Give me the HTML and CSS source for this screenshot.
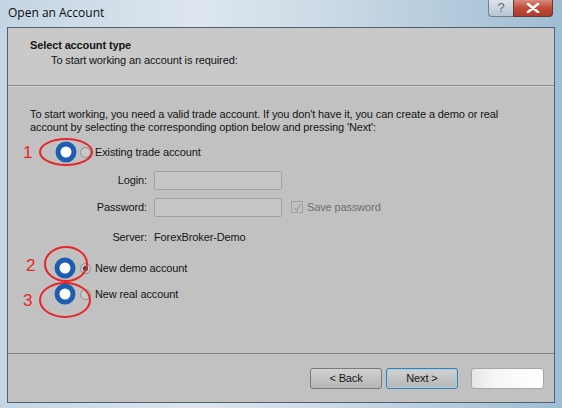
FILE: index.html
```html
<!DOCTYPE html>
<html>
<head>
<meta charset="utf-8">
<link rel="stylesheet" href="styles.css">
</head>
<body>
<div class="window">
  <div class="titlebar">
    <span class="title">Open an Account</span>
    <div class="controls">
      <span class="btn-help">?</span>
      <span class="btn-close">
        <svg width="14" height="10" viewBox="0 0 14 10"><path d="M2 1 L12 9 M12 1 L2 9" stroke="#fff" stroke-width="2.6" stroke-linecap="round"/></svg>
      </span>
    </div>
  </div>
  <div class="client">
    <div class="header">
      <div class="h-title">Select account type</div>
      <div class="h-sub">To start working an account is required:</div>
    </div>
    <div class="content">
      <p class="desc">To start working, you need a valid trade account. If you don't have it, you can create a demo or real account by selecting the corresponding option below and pressing 'Next':</p>
      <div class="radio-row r1"><span class="radio"></span><span>Existing trade account</span></div>
      <div class="field f-login"><span class="lbl">Login:</span><span class="input"></span></div>
      <div class="field f-pass"><span class="lbl">Password:</span><span class="input"></span><span class="check"><svg width="9" height="9" viewBox="0 0 9 9"><path d="M1.5 5 L3.5 7.5 L7.5 1" fill="none" stroke="#9a9a9a" stroke-width="1.2"/></svg></span><span class="disabled">Save password</span></div>
      <div class="field f-server"><span class="lbl">Server:</span><span>ForexBroker-Demo</span></div>
      <div class="radio-row r2"><span class="radio checked"></span><span>New demo account</span></div>
      <div class="radio-row r3"><span class="radio"></span><span>New real account</span></div>
    </div>
    <div class="footer">
      <span class="button">&lt; Back</span>
      <span class="button default">Next &gt;</span>
      <span class="button hidden-btn"></span>
    </div>
  </div>
  <svg class="annot" width="562" height="408" viewBox="0 0 562 408">
    <g fill="none" stroke="#e8262a" stroke-width="2">
      <ellipse cx="66" cy="152" rx="26" ry="13"/>
      <ellipse cx="66" cy="264" rx="21" ry="17"/>
      <ellipse cx="65" cy="300" rx="25" ry="17"/>
    </g>
    <g fill="#fff" stroke="#1d5eb0" stroke-width="5">
      <circle cx="66" cy="152" r="8"/>
      <circle cx="65" cy="268" r="8"/>
      <circle cx="65" cy="294" r="8"/>
    </g>
    <g fill="#e8262a" class="nums">
      <text x="23" y="158">1</text>
      <text x="26" y="271">2</text>
      <text x="23" y="306">3</text>
    </g>
  </svg>
</div>
</body>
</html>
```
FILE: styles.css
```css
html, body { margin: 0; padding: 0; }
body { width: 562px; height: 408px; overflow: hidden; background: #a9c3d6; }
.window {
  position: relative;
  width: 562px; height: 408px;
  box-sizing: border-box;
  display: flex; flex-direction: column;
  background: linear-gradient(90deg, #c3d5e3 0%, #dde6ee 35%, #cfdce7 55%, #b4cbdc 80%, #9fbdd3 100%);
  font-family: "Liberation Sans", Arial, sans-serif;
  font-size: 11px;
  letter-spacing: -0.12px;
  color: #151515;
}
.titlebar {
  height: 27px; flex: none;
  display: flex; align-items: flex-start;
  position: relative;
}
.title { font-family: "Open Sans", "Liberation Sans", sans-serif; font-size: 12px; letter-spacing: 0; color: #0d0d0d; padding: 6px 0 0 8px; line-height: 14px; }
.controls { margin-left: auto; margin-right: 9px; display: flex; height: 18px; }
.btn-help {
  width: 25px; height: 17px; box-sizing: border-box;
  border: 1px solid #6f7f8c; border-top: none; border-right: none;
  border-radius: 0 0 0 4px;
  background: linear-gradient(#dbe3ea, #b6c5d2);
  color: #6a6a6a; font-size: 13px; line-height: 16px; text-align: center;
}
.btn-close {
  width: 40px; height: 17px; box-sizing: border-box;
  border: 1px solid #5e3b36; border-top: none;
  border-radius: 0 0 4px 0;
  background: linear-gradient(#d88a7c, #c24a38 50%, #b23a2a);
  display: flex; align-items: center; justify-content: center;
}
.client {
  flex: 1;
  margin: 0 7px 5px 7px;
  border: 1px solid #50606e;
  background: #c1c1c1;
  display: flex; flex-direction: column;
}
.header {
  height: 58px; flex: none; box-sizing: border-box;
  background: #c9c9c9;
  border-bottom: 1px solid #8a8a8a;
  padding: 11px 0 0 22px;
}
.h-title { font-weight: bold; font-size: 11px; line-height: 13px; }
.h-sub { padding-left: 21px; line-height: 13px; margin-top: 2px; }
.content {
  flex: 1;
  border-top: 1px solid #d6d6d6;
  padding: 21px 0 0 22px;
  display: flex; flex-direction: column;
}
.desc { margin: 0; line-height: 13px; width: 500px; }
.radio-row { display: flex; align-items: center; height: 18px; padding-left: 50px; }
.r1 { margin-top: 9px; }
.r2 { margin-top: 13px; }
.r3 { margin-top: 8px; }
.radio {
  width: 11px; height: 11px; box-sizing: border-box;
  border: 1px solid #8d8d8d; border-radius: 50%;
  background: #cacaca; margin-right: 4px; position: relative;
}
.radio.checked::after {
  content: ""; position: absolute; left: 2px; top: 2px; width: 5px; height: 5px; border-radius: 50%; background: #3a3a3a;
}
.field { display: flex; align-items: center; height: 18px; }
.lbl { width: 117px; text-align: right; margin-right: 7px; }
.f-login { margin-top: 10px; }
.f-pass { margin-top: 9px; }
.f-server { margin-top: 12px; }
.input {
  width: 128px; height: 19px; box-sizing: border-box;
  border: 1px solid #a2a2a2; border-radius: 2px;
  background: #c6c6c6;
}
.check {
  width: 12px; height: 12px; box-sizing: border-box;
  border: 1px solid #a0a0a0; margin: 0 4px 0 9px;
  display: flex; align-items: center; justify-content: center;
}
.disabled { color: #6e6e6e; }
.footer {
  height: 49px; flex: none; box-sizing: border-box;
  border-top: 1px solid #808080;
  padding: 14px 10px 0 0;
  display: flex; justify-content: flex-end; align-items: flex-start;
}
.button {
  width: 72px; height: 21px; box-sizing: border-box;
  border: 1px solid #7a7a7a; border-radius: 3px;
  background: linear-gradient(#d2d2d2, #c3c3c3 50%, #b6b6b6);
  text-align: center; line-height: 19px; font-size: 11px;
  margin-left: 4px;
}
.button.default { border-color: #3d7fa8; box-shadow: inset 0 0 0 1px #9fd0ea; }
.hidden-btn {
  margin-left: 13px; width: 73px;
  border-color: #a7a7a7;
  background: linear-gradient(90deg, #e6e6e6, #f6f6f6 30%, #ffffff);
}
.annot { position: absolute; left: 0; top: 0; pointer-events: none; }
.nums { font-family: "Liberation Sans", Arial, sans-serif; font-size: 17px; letter-spacing: 0; }
```
